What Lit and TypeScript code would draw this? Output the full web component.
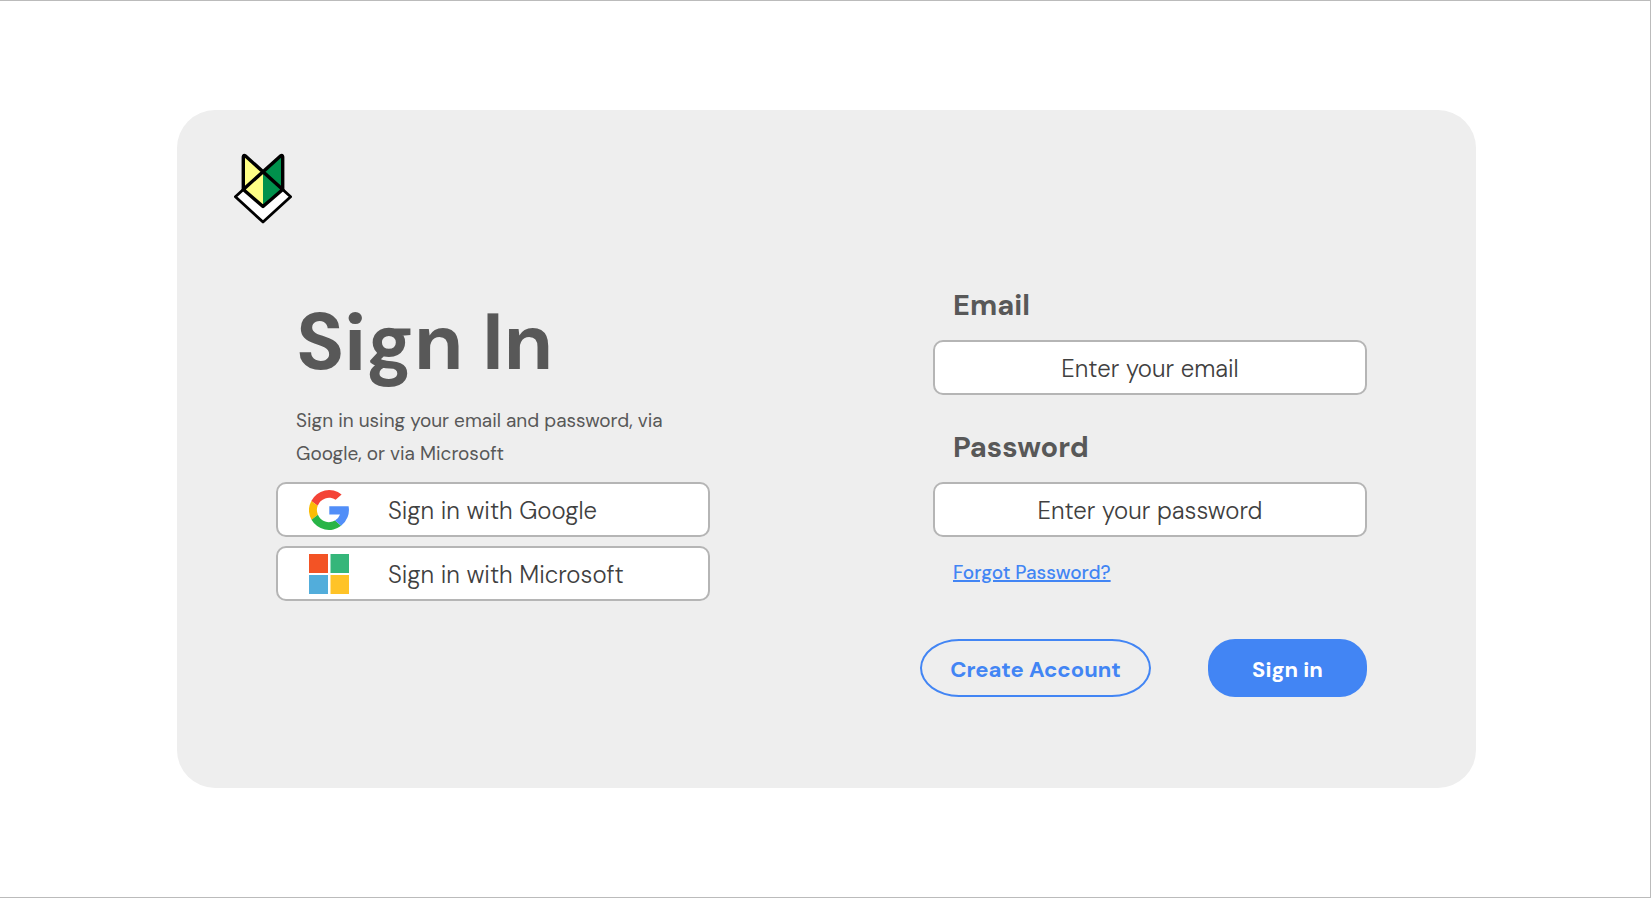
import { LitElement, html, css } from "lit";
import { customElement } from "lit/decorators.js";

@customElement("brand-logo")
class BrandLogo extends LitElement {
  static styles = css`
    :host {
      display: block;
      width: 60px;
      height: 72px;
    }
    .mark {
      display: block;
      width: 100%;
      height: 100%;
    }
  `;

  render() {
    return html`
      <svg class="mark" viewBox="0 0 60 72" role="img" aria-label="Logo" stroke-linejoin="round" stroke-linecap="round">
        <path d="M2.4 43.8 30 18.5 57.6 43.8 30 69Z" fill="#fff" stroke="#000" stroke-width="2.8" />
        <path d="M10.5 2.5 30 19 10.5 36Z" fill="#ffff85" />
        <path d="M30 19V53L10.5 36Z" fill="#ffff85" />
        <path d="M49.5 2.5 30 19 49.5 36Z" fill="#00914c" />
        <path d="M30 19V53L49.5 36Z" fill="#00914c" />
        <path
          d="M10.3 36.5V4Q10.5 1.8 12.5 3L49.7 36.5 30 53.5 10.3 36.5 47.5 3Q49.5 1.8 49.7 4V36.5"
          fill="none"
          stroke="#000"
          stroke-width="3.4"
        />
      </svg>
    `;
  }
}

@customElement("app-root")
class AppRoot extends LitElement {
  static styles = css`
    :host {
      display: flex;
      box-sizing: border-box;
      min-height: 100vh;
      padding: 109px 174px 109px 177px;
      border: 1px solid #bbb;
      border-left: 0;
      background: #fff;
      color: #585858;
      font-family: "DM Sans", "Open Sans", sans-serif;
    }
    .card {
      flex: 1;
      box-sizing: border-box;
      padding: 43px 109px 90px 99px;
      border-radius: 38px;
      background: #eee;
    }
    .logo {
      margin-left: -43px;
    }
    .columns {
      display: grid;
      grid-template-columns: 1fr 1fr;
      column-gap: 223px;
      margin-top: 60px;
    }
    .intro {
      padding: 7px 0 0 20px;
    }
    h1 {
      margin: 0;
      font-size: 80px;
      line-height: 100px;
      font-weight: 700;
    }
    .hint {
      margin: 12px 0;
      font-size: 19px;
      line-height: 33px;
    }
    .providers {
      display: grid;
      gap: 9px;
    }
    .provider,
    .field {
      box-sizing: border-box;
      width: 100%;
      height: 55px;
      border: 2px solid #b5b5b5;
      border-radius: 10px;
      background: #fff;
      color: #404040;
      font-family: inherit;
      font-size: 24px;
      font-weight: 300;
    }
    .provider {
      display: flex;
      align-items: center;
      gap: 39px;
      padding: 0 31px;
      cursor: pointer;
    }
    .provider span {
      padding-top: 2px;
    }
    .icon {
      width: 40px;
      height: 40px;
    }
    .field {
      padding: 2px 20px 0;
      text-align: center;
    }
    .field::placeholder {
      color: #404040;
      opacity: 1;
    }
    .label {
      display: block;
      padding-left: 20px;
      margin-bottom: 15px;
      font-size: 29px;
      line-height: 40px;
      font-weight: 700;
    }
    .group + .group {
      margin-top: 32px;
    }
    .forgot {
      display: inline-block;
      margin: 22px 0 0 20px;
      color: #4285f4;
      font-size: 19px;
      line-height: 28px;
      font-weight: 500;
      text-decoration-thickness: 2px;
    }
    .actions {
      display: flex;
      justify-content: space-between;
      margin: 52px 0 0 -13px;
    }
    .action {
      box-sizing: border-box;
      height: 58px;
      padding: 2px 0 0;
      border: 2px solid #4285f4;
      font-family: inherit;
      font-size: 22px;
      font-weight: 700;
      cursor: pointer;
    }
    .create {
      width: 231px;
      border-radius: 39px / 29px;
      background: transparent;
      color: #4285f4;
    }
    .submit {
      width: 159px;
      border-radius: 27px;
      background: #4285f4;
      color: #fff;
    }
  `;

  render() {
    return html`
      <main class="card">
        <brand-logo class="logo"></brand-logo>
        <div class="columns">
          <section>
            <div class="intro">
              <h1>Sign In</h1>
              <p class="hint">Sign in using your email and password, via Google, or via Microsoft</p>
            </div>
            <div class="providers">
              <button class="provider" type="button">
                <svg class="icon" viewBox="0 0 40 40" aria-hidden="true">
                  <path fill="#f44336" d="M2.3 11A20 20 0 0 1 32.6 4.4L26.6 9.7A12 12 0 0 0 8.7 15.8Z" />
                  <path fill="#fbbc05" d="M2.3 11 8.7 15.8A12 12 0 0 0 8.9 24.8L2.5 29.7A20 20 0 0 1 2.3 11Z" />
                  <path fill="#28b446" d="M2.5 29.7 8.9 24.8A12 12 0 0 0 26 30.5L32.1 35.8A20 20 0 0 1 2.5 29.7Z" />
                  <path fill="#518ef8" d="M20.3 16.2H39.6A20 20 0 0 1 32.1 35.8L26 30.5A12 12 0 0 0 31 24.4H20.3Z" />
                </svg>
                <span>Sign in with Google</span>
              </button>
              <button class="provider" type="button">
                <svg class="icon" viewBox="0 0 40 40" aria-hidden="true">
                  <path fill="#f35325" d="M0 0h19v19H0z" />
                  <path fill="#35b67a" d="M21.5 0H40v19H21.5z" />
                  <path fill="#52addb" d="M0 21h19v19H0z" />
                  <path fill="#ffc327" d="M21.5 21H40v19H21.5z" />
                </svg>
                <span>Sign in with Microsoft</span>
              </button>
            </div>
          </section>
          <form>
            <div class="group">
              <label class="label" for="email">Email</label>
              <input class="field" id="email" type="email" placeholder="Enter your email" />
            </div>
            <div class="group">
              <label class="label" for="password">Password</label>
              <input class="field" id="password" type="password" placeholder="Enter your password" />
            </div>
            <a class="forgot" href="#">Forgot Password?</a>
            <div class="actions">
              <button class="action create" type="button">Create Account</button>
              <button class="action submit" type="submit">Sign in</button>
            </div>
          </form>
        </div>
      </main>
    `;
  }
}
